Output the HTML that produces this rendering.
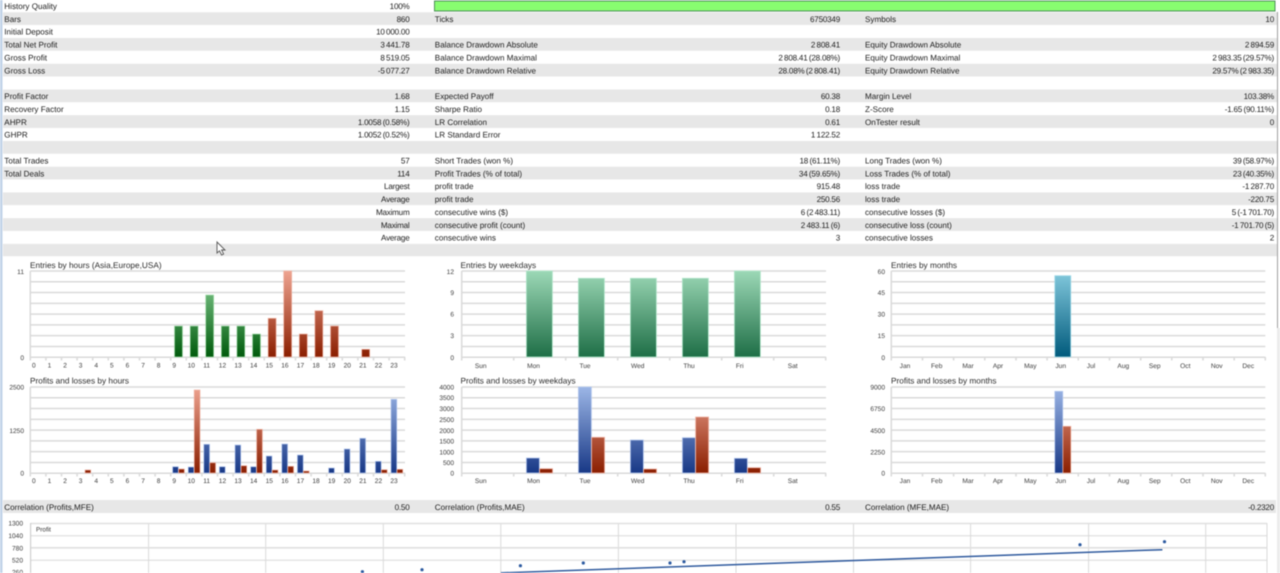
<!DOCTYPE html>
<html><head><meta charset="utf-8"><style>
html,body{margin:0;padding:0;background:#fff;width:1280px;height:573px;overflow:hidden}
svg{display:block;filter:blur(.5px);text-rendering:geometricPrecision;font-family:"Liberation Sans",sans-serif}
.t text{font-size:8.1px;fill:#1c1c1c}
.t .r{text-anchor:end;letter-spacing:-.22px;word-spacing:-.6px}
.ax text{font-size:6.6px;fill:#3c3c3c}
.ti{font-size:8.25px;fill:#2c2c2c}
</style></head><body>
<svg width="1280" height="573" viewBox="0 0 1280 573" xmlns="http://www.w3.org/2000/svg">
<defs>
<linearGradient id="gr" gradientUnits="userSpaceOnUse" x1="0" x2="0" y1="271" y2="357"><stop offset="0" stop-color="#8ed49a"/><stop offset="1" stop-color="#005a0c"/></linearGradient>
<linearGradient id="r1" gradientUnits="userSpaceOnUse" x1="0" x2="0" y1="271" y2="357"><stop offset="0" stop-color="#eea390"/><stop offset="1" stop-color="#8a1e00"/></linearGradient>
<linearGradient id="r2" gradientUnits="userSpaceOnUse" x1="0" x2="0" y1="387" y2="473"><stop offset="0" stop-color="#eea390"/><stop offset="1" stop-color="#8a1e00"/></linearGradient>
<linearGradient id="b2" gradientUnits="userSpaceOnUse" x1="0" x2="0" y1="387" y2="473"><stop offset="0" stop-color="#9cb6e6"/><stop offset="1" stop-color="#183886"/></linearGradient>
<linearGradient id="te" gradientUnits="userSpaceOnUse" x1="0" x2="0" y1="271" y2="357"><stop offset="0" stop-color="#9cd8b6"/><stop offset="1" stop-color="#1e6e46"/></linearGradient>
<linearGradient id="cy" gradientUnits="userSpaceOnUse" x1="0" x2="0" y1="271" y2="357"><stop offset="0" stop-color="#84cade"/><stop offset="1" stop-color="#005a7c"/></linearGradient>
<path id="g1" d="M30.3 0H405M30.3 10.78H405M30.3 21.56H405M30.3 32.34H405M30.3 43.12H405M30.3 53.9H405M30.3 64.68H405M30.3 75.46H405M30.3 86.25H405M30.3 0V89.5M45.9 86V89.5M61.5 86V89.5M77.1 86V89.5M92.7 86V89.5M108.3 86V89.5M123.9 86V89.5M139.5 86V89.5M155.1 86V89.5M170.7 86V89.5M186.3 86V89.5M201.9 86V89.5M217.5 86V89.5M233.1 86V89.5M248.7 86V89.5M264.3 86V89.5M279.9 86V89.5M295.5 86V89.5M311.1 86V89.5M326.7 86V89.5M342.3 86V89.5M357.9 86V89.5M373.5 86V89.5M389.1 86V89.5M404.7 86V89.5" fill="none" stroke="#dadada" stroke-width="1.5"/>
<path id="g2" d="M461.7 0H826M461.7 10.78H826M461.7 21.56H826M461.7 32.34H826M461.7 43.12H826M461.7 53.9H826M461.7 64.68H826M461.7 75.46H826M461.7 86.25H826M461.7 0V89.5M513.7 86V89.5M565.7 86V89.5M617.7 86V89.5M669.7 86V89.5M721.7 86V89.5M773.7 86V89.5M825.7 86V89.5" fill="none" stroke="#dadada" stroke-width="1.5"/>
<path id="g3" d="M891.3 0H1265.3M891.3 10.78H1265.3M891.3 21.56H1265.3M891.3 32.34H1265.3M891.3 43.12H1265.3M891.3 53.9H1265.3M891.3 64.68H1265.3M891.3 75.46H1265.3M891.3 86.25H1265.3M891.3 0V89.5M922.5 86V89.5M953.6 86V89.5M984.8 86V89.5M1016 86V89.5M1047.1 86V89.5M1078.3 86V89.5M1109.5 86V89.5M1140.7 86V89.5M1171.8 86V89.5M1203 86V89.5M1234.2 86V89.5M1265.3 86V89.5" fill="none" stroke="#dadada" stroke-width="1.5"/>
</defs>

<rect width="1280" height="573" fill="#fff"/>
<!-- table stripes -->
<g fill="#e7e7e7">
<rect x="3" y="12.3" width="1274" height="12.6"/>
<rect x="3" y="38" width="1274" height="12.7"/>
<rect x="3" y="63.8" width="1274" height="12.7"/>
<rect x="3" y="89.5" width="1274" height="12.7"/>
<rect x="3" y="115.2" width="1274" height="12.7"/>
<rect x="3" y="141" width="1274" height="12.7"/>
<rect x="3" y="166.7" width="1274" height="12.7"/>
<rect x="3" y="192.4" width="1274" height="12.7"/>
<rect x="3" y="218.2" width="1274" height="12.7"/>
<rect x="3" y="243.9" width="1274" height="12.3"/>
<rect x="3" y="500" width="1273" height="13"/>
</g>
<!-- side bars -->
<rect x="0" y="0" width="2.5" height="573" fill="#c2d3e8"/>
<rect x="1277" y="12" width="1" height="316" fill="#a0a0a0"/>
<rect x="1277" y="328" width="3" height="245" fill="#ececec"/>
<!-- progress bar -->
<rect x="434.5" y="1" width="840.5" height="10" fill="#88fd70" stroke="#4e8f5a" stroke-width="1"/>

<!-- table text -->
<g class="t">
<text x="4.3" y="9">History Quality</text><text class="r" x="409.5" y="9">100%</text>
<text x="4.3" y="21.9">Bars</text><text class="r" x="409.5" y="21.9">860</text>
<text x="434.8" y="21.9">Ticks</text><text class="r" x="840" y="21.9">6750349</text>
<text x="865" y="21.9">Symbols</text><text class="r" x="1274" y="21.9">10</text>
<text x="4.3" y="34.7">Initial Deposit</text><text class="r" x="409.5" y="34.7">10 000.00</text>
<text x="4.3" y="47.6">Total Net Profit</text><text class="r" x="409.5" y="47.6">3 441.78</text>
<text x="434.8" y="47.6">Balance Drawdown Absolute</text><text class="r" x="840" y="47.6">2 808.41</text>
<text x="865" y="47.6">Equity Drawdown Absolute</text><text class="r" x="1274" y="47.6">2 894.59</text>
<text x="4.3" y="60.5">Gross Profit</text><text class="r" x="409.5" y="60.5">8 519.05</text>
<text x="434.8" y="60.5">Balance Drawdown Maximal</text><text class="r" x="840" y="60.5">2 808.41 (28.08%)</text>
<text x="865" y="60.5">Equity Drawdown Maximal</text><text class="r" x="1274" y="60.5">2 983.35 (29.57%)</text>
<text x="4.3" y="73.4">Gross Loss</text><text class="r" x="409.5" y="73.4">-5 077.27</text>
<text x="434.8" y="73.4">Balance Drawdown Relative</text><text class="r" x="840" y="73.4">28.08% (2 808.41)</text>
<text x="865" y="73.4">Equity Drawdown Relative</text><text class="r" x="1274" y="73.4">29.57% (2 983.35)</text>
<text x="4.3" y="99.1">Profit Factor</text><text class="r" x="409.5" y="99.1">1.68</text>
<text x="434.8" y="99.1">Expected Payoff</text><text class="r" x="840" y="99.1">60.38</text>
<text x="865" y="99.1">Margin Level</text><text class="r" x="1274" y="99.1">103.38%</text>
<text x="4.3" y="112">Recovery Factor</text><text class="r" x="409.5" y="112">1.15</text>
<text x="434.8" y="112">Sharpe Ratio</text><text class="r" x="840" y="112">0.18</text>
<text x="865" y="112">Z-Score</text><text class="r" x="1274" y="112">-1.65 (90.11%)</text>
<text x="4.3" y="124.8">AHPR</text><text class="r" x="409.5" y="124.8">1.0058 (0.58%)</text>
<text x="434.8" y="124.8">LR Correlation</text><text class="r" x="840" y="124.8">0.61</text>
<text x="865" y="124.8">OnTester result</text><text class="r" x="1274" y="124.8">0</text>
<text x="4.3" y="137.7">GHPR</text><text class="r" x="409.5" y="137.7">1.0052 (0.52%)</text>
<text x="434.8" y="137.7">LR Standard Error</text><text class="r" x="840" y="137.7">1 122.52</text>
<text x="4.3" y="163.4">Total Trades</text><text class="r" x="409.5" y="163.4">57</text>
<text x="434.8" y="163.4">Short Trades (won %)</text><text class="r" x="840" y="163.4">18 (61.11%)</text>
<text x="865" y="163.4">Long Trades (won %)</text><text class="r" x="1274" y="163.4">39 (58.97%)</text>
<text x="4.3" y="176.3">Total Deals</text><text class="r" x="409.5" y="176.3">114</text>
<text x="434.8" y="176.3">Profit Trades (% of total)</text><text class="r" x="840" y="176.3">34 (59.65%)</text>
<text x="865" y="176.3">Loss Trades (% of total)</text><text class="r" x="1274" y="176.3">23 (40.35%)</text>
<text class="r" x="409.5" y="189.2">Largest</text>
<text x="434.8" y="189.2">profit trade</text><text class="r" x="840" y="189.2">915.48</text>
<text x="865" y="189.2">loss trade</text><text class="r" x="1274" y="189.2">-1 287.70</text>
<text class="r" x="409.5" y="202">Average</text>
<text x="434.8" y="202">profit trade</text><text class="r" x="840" y="202">250.56</text>
<text x="865" y="202">loss trade</text><text class="r" x="1274" y="202">-220.75</text>
<text class="r" x="409.5" y="214.9">Maximum</text>
<text x="434.8" y="214.9">consecutive wins ($)</text><text class="r" x="840" y="214.9">6 (2 483.11)</text>
<text x="865" y="214.9">consecutive losses ($)</text><text class="r" x="1274" y="214.9">5 (-1 701.70)</text>
<text class="r" x="409.5" y="227.8">Maximal</text>
<text x="434.8" y="227.8">consecutive profit (count)</text><text class="r" x="840" y="227.8">2 483.11 (6)</text>
<text x="865" y="227.8">consecutive loss (count)</text><text class="r" x="1274" y="227.8">-1 701.70 (5)</text>
<text class="r" x="409.5" y="240.7">Average</text>
<text x="434.8" y="240.7">consecutive wins</text><text class="r" x="840" y="240.7">3</text>
<text x="865" y="240.7">consecutive losses</text><text class="r" x="1274" y="240.7">2</text>
<text x="4.3" y="510">Correlation (Profits,MFE)</text><text class="r" x="409.5" y="510">0.50</text>
<text x="434.8" y="510">Correlation (Profits,MAE)</text><text class="r" x="840" y="510">0.55</text>
<text x="865" y="510">Correlation (MFE,MAE)</text><text class="r" x="1274" y="510">-0.2320</text>
</g>

<!-- cursor -->
<path d="M217 242V253L219.5 250.8L221.6 255L223.6 254L221.6 250H225Z" fill="#fff" stroke="#555" stroke-width=".9"/>

<!-- grids -->
<use href="#g1" y="271"/><use href="#g1" y="387"/>
<use href="#g2" y="271"/><use href="#g2" y="387"/>
<use href="#g3" y="271"/><use href="#g3" y="387"/>

<!-- titles -->
<text class="ti" x="30" y="268">Entries by hours (Asia,Europe,USA)</text>
<text class="ti" x="30" y="383.5">Profits and losses by hours</text>
<text class="ti" x="460.5" y="268">Entries by weekdays</text>
<text class="ti" x="460.5" y="383.5">Profits and losses by weekdays</text>
<text class="ti" x="891" y="268">Entries by months</text>
<text class="ti" x="891" y="383.5">Profits and losses by months</text>

<!-- chart 1 bars -->
<g stroke="#a9dfb0" stroke-width=".7" fill="url(#gr)">
<rect x="174.5" y="326" width="8" height="31"/>
<rect x="190.1" y="326" width="8" height="31"/>
<rect x="205.7" y="295" width="8" height="62"/>
<rect x="221.3" y="326" width="8" height="31"/>
<rect x="236.9" y="326" width="8" height="31"/>
<rect x="252.5" y="334" width="8" height="23"/>
</g>
<g stroke="#efb5a6" stroke-width=".7" fill="url(#r1)">
<rect x="268.1" y="318.3" width="8" height="38.7"/>
<rect x="283.7" y="271" width="8" height="86"/>
<rect x="299.3" y="334" width="8" height="23"/>
<rect x="314.9" y="310.7" width="8" height="46.3"/>
<rect x="330.5" y="326" width="8" height="31"/>
<rect x="361.7" y="349.3" width="8" height="7.7"/>
</g>
<!-- chart 2 bars -->
<g stroke="#b4c8ee" stroke-width=".7" fill="url(#b2)">
<rect x="172.6" y="466.7" width="5.8" height="6.3"/>
<rect x="188.2" y="467" width="5.8" height="6"/>
<rect x="203.8" y="444.3" width="5.8" height="28.7"/>
<rect x="219.4" y="466.7" width="5.8" height="6.3"/>
<rect x="235" y="445" width="5.8" height="28"/>
<rect x="250.6" y="466.7" width="5.8" height="6.3"/>
<rect x="266.2" y="456" width="5.8" height="17"/>
<rect x="281.8" y="444" width="5.8" height="29"/>
<rect x="297.4" y="455" width="5.8" height="18"/>
<rect x="328.6" y="468" width="5.8" height="5"/>
<rect x="344.2" y="449" width="5.8" height="24"/>
<rect x="359.8" y="438.3" width="5.8" height="34.7"/>
<rect x="375.4" y="461.3" width="5.8" height="11.7"/>
<rect x="391" y="399.3" width="5.8" height="73.7"/>
</g>
<g stroke="#efb5a6" stroke-width=".7" fill="url(#r2)">
<rect x="85" y="470" width="5.8" height="3"/>
<rect x="178.6" y="469" width="5.8" height="4"/>
<rect x="194.2" y="390" width="5.8" height="83"/>
<rect x="209.8" y="462.7" width="5.8" height="10.3"/>
<rect x="241" y="465.7" width="5.8" height="7.3"/>
<rect x="256.6" y="429.3" width="5.8" height="43.7"/>
<rect x="272.2" y="470" width="5.8" height="3"/>
<rect x="287.8" y="466.3" width="5.8" height="6.7"/>
<rect x="303.4" y="471" width="5.8" height="2"/>
<rect x="381.4" y="469.7" width="5.8" height="3.3"/>
<rect x="397" y="469.3" width="5.8" height="3.7"/>
</g>
<!-- chart 3 bars -->
<g stroke="#b2e6cb" stroke-width=".8" fill="url(#te)">
<rect x="526.4" y="271" width="26" height="86"/>
<rect x="578.4" y="278.3" width="26" height="78.7"/>
<rect x="630.4" y="278.3" width="26" height="78.7"/>
<rect x="682.4" y="278.3" width="26" height="78.7"/>
<rect x="734.4" y="271" width="26" height="86"/>
</g>
<!-- chart 4 bars -->
<g stroke="#b4c8ee" stroke-width=".8" fill="url(#b2)">
<rect x="526.4" y="458" width="13" height="15"/>
<rect x="578.4" y="387" width="13" height="86"/>
<rect x="630.4" y="440" width="13" height="33"/>
<rect x="682.4" y="437.7" width="13" height="35.3"/>
<rect x="734.4" y="458.3" width="13" height="14.7"/>
</g>
<g stroke="#efb5a6" stroke-width=".8" fill="url(#r2)">
<rect x="539.6" y="468.7" width="13" height="4.3"/>
<rect x="591.6" y="437.3" width="13" height="35.7"/>
<rect x="643.6" y="469" width="13" height="4"/>
<rect x="695.6" y="417" width="13" height="56"/>
<rect x="747.6" y="467.7" width="13" height="5.3"/>
</g>
<!-- chart 5/6 bars -->
<rect x="1054.8" y="275.7" width="16" height="81.3" fill="url(#cy)" stroke="#a4dbe8" stroke-width=".8"/>
<rect x="1054.8" y="391.3" width="8" height="81.7" fill="url(#b2)" stroke="#b4c8ee" stroke-width=".7"/>
<rect x="1062.9" y="426.3" width="8" height="46.7" fill="url(#r2)" stroke="#efb5a6" stroke-width=".7"/>

<!-- axis labels -->
<g class="ax">
<g text-anchor="end">
<text x="24" y="274">11</text><text x="24" y="360">0</text>
<text x="24" y="389.5">2500</text><text x="24" y="433">1250</text><text x="24" y="475.5">0</text>
<text x="454" y="274">12</text><text x="454" y="295">9</text><text x="454" y="316.5">6</text><text x="454" y="338">3</text><text x="454" y="360">0</text>
<text x="454" y="389.5">4000</text><text x="454" y="400">3500</text><text x="454" y="411">3000</text><text x="454" y="422">2500</text><text x="454" y="433">2000</text><text x="454" y="443.5">1500</text><text x="454" y="454.5">1000</text><text x="454" y="465">500</text><text x="454" y="475.5">0</text>
<text x="885" y="274">60</text><text x="885" y="295">45</text><text x="885" y="316.5">30</text><text x="885" y="338">15</text><text x="885" y="360">0</text>
<text x="885" y="389.5">9000</text><text x="885" y="411">6750</text><text x="885" y="433">4500</text><text x="885" y="454.5">2250</text><text x="885" y="475.5">0</text>
<text x="23" y="525.7">1300</text><text x="23" y="538">1040</text><text x="23" y="550.3">780</text><text x="23" y="562.6">520</text><text x="23" y="574.5">260</text>
</g>
<g>
<text x="32" y="367.5">0</text><text x="47.6" y="367.5">1</text><text x="63.2" y="367.5">2</text><text x="78.8" y="367.5">3</text><text x="94.4" y="367.5">4</text><text x="110" y="367.5">5</text><text x="125.6" y="367.5">6</text><text x="141.2" y="367.5">7</text><text x="156.8" y="367.5">8</text><text x="172.4" y="367.5">9</text><text x="187.6" y="367.5">10</text><text x="203.2" y="367.5">11</text><text x="218.8" y="367.5">12</text><text x="234.4" y="367.5">13</text><text x="250" y="367.5">14</text><text x="265.6" y="367.5">15</text><text x="281.2" y="367.5">16</text><text x="296.8" y="367.5">17</text><text x="312.4" y="367.5">18</text><text x="328" y="367.5">19</text><text x="343.6" y="367.5">20</text><text x="359.2" y="367.5">21</text><text x="374.8" y="367.5">22</text><text x="390.4" y="367.5">23</text>
<text x="32" y="483">0</text><text x="47.6" y="483">1</text><text x="63.2" y="483">2</text><text x="78.8" y="483">3</text><text x="94.4" y="483">4</text><text x="110" y="483">5</text><text x="125.6" y="483">6</text><text x="141.2" y="483">7</text><text x="156.8" y="483">8</text><text x="172.4" y="483">9</text><text x="187.6" y="483">10</text><text x="203.2" y="483">11</text><text x="218.8" y="483">12</text><text x="234.4" y="483">13</text><text x="250" y="483">14</text><text x="265.6" y="483">15</text><text x="281.2" y="483">16</text><text x="296.8" y="483">17</text><text x="312.4" y="483">18</text><text x="328" y="483">19</text><text x="343.6" y="483">20</text><text x="359.2" y="483">21</text><text x="374.8" y="483">22</text><text x="390.4" y="483">23</text>
</g>
<g text-anchor="middle">
<text x="480.7" y="368">Sun</text><text x="533.5" y="368">Mon</text><text x="585" y="368">Tue</text><text x="637.7" y="368">Wed</text><text x="689" y="368">Thu</text><text x="739.7" y="368">Fri</text><text x="792.7" y="368">Sat</text>
<text x="480.7" y="483">Sun</text><text x="533.5" y="483">Mon</text><text x="585" y="483">Tue</text><text x="637.7" y="483">Wed</text><text x="689" y="483">Thu</text><text x="739.7" y="483">Fri</text><text x="792.7" y="483">Sat</text>
<text x="905" y="368">Jan</text><text x="936.7" y="368">Feb</text><text x="968" y="368">Mar</text><text x="998" y="368">Apr</text><text x="1030.3" y="368">May</text><text x="1060.7" y="368">Jun</text><text x="1091" y="368">Jul</text><text x="1123.3" y="368">Aug</text><text x="1154.7" y="368">Sep</text><text x="1185.3" y="368">Oct</text><text x="1216.7" y="368">Nov</text><text x="1248.3" y="368">Dec</text>
<text x="905" y="483">Jan</text><text x="936.7" y="483">Feb</text><text x="968" y="483">Mar</text><text x="998" y="483">Apr</text><text x="1030.3" y="483">May</text><text x="1060.7" y="483">Jun</text><text x="1091" y="483">Jul</text><text x="1123.3" y="483">Aug</text><text x="1154.7" y="483">Sep</text><text x="1185.3" y="483">Oct</text><text x="1216.7" y="483">Nov</text><text x="1248.3" y="483">Dec</text>
</g>
</g>

<!-- bottom chart -->
<path d="M30.6 535.7H1267M30.6 560.3H1267M148.6 523V573M265.7 523V573M383.3 523V573M500.8 523V573M618.4 523V573M736 523V573M853.5 523V573M970.6 523V573M1088.6 523V573M1205.7 523V573M1267 523V573" fill="none" stroke="#d9d9d9" stroke-width="1"/>
<path d="M30.6 523.5H1267M30.6 547.8H1267" fill="none" stroke="#e0e0e0" stroke-width="1.6"/>
<path d="M30.6 523V573" fill="none" stroke="#cfcfcf" stroke-width="1.2"/>
<text x="36" y="531.5" font-size="6.4" fill="#333">Profit</text>
<path d="M500.8 572.9L1162.4 549.7" stroke="#2f5a9e" stroke-width="1.5" fill="none"/>
<g fill="#2c5aa0">
<circle cx="362.4" cy="571.7" r="1.6"/><circle cx="422" cy="569.7" r="1.6"/><circle cx="520.4" cy="565.7" r="1.6"/><circle cx="583.3" cy="563" r="1.6"/><circle cx="670" cy="563" r="1.6"/><circle cx="684" cy="561.7" r="1.6"/><circle cx="1080" cy="544.7" r="1.6"/><circle cx="1164.5" cy="541.7" r="1.6"/>
</g>
</svg>
</body></html>
